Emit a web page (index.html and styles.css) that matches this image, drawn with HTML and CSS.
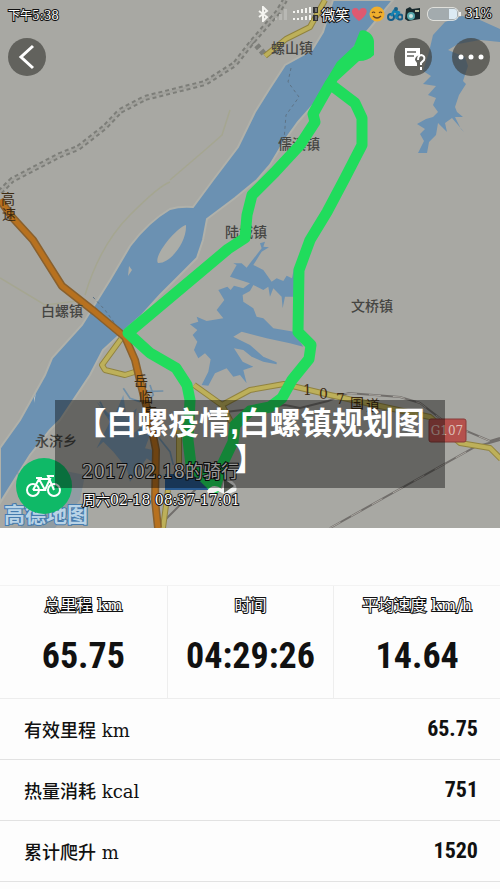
FILE: index.html
```html
<!DOCTYPE html>
<html lang="zh-CN">
<head>
<meta charset="utf-8">
<meta name="viewport" content="width=device-width, initial-scale=1">
<title>2017.02.18的骑行</title>
<link rel="stylesheet" href="styles.css">
</head>
<body>
<main class="page">
  <section class="map">
    <svg class="map-canvas" viewBox="0 0 500 528" preserveAspectRatio="xMidYMid slice" role="img" aria-label="骑行路线">
      <rect width="500" height="528" fill="#a8a8a3"/>
      <!-- river -->
      <path d="M333 0L323 32L312 50L285 65L270 88L255 112L238 147L213 180L193 207Q180 206 170 209Q148 222 130 246L110 280L82 325L52 358L45 375L20 420L0 448V503L30 455L50 430L60 420L90 375L103 350L125 330L142 315L160 295L180 275L197 258L203 240L207 219L235 198L257 180L270 165L285 140L298 122L314 104L340 65L365 34L393 0Z" fill="#6b91b2" stroke="#b0b1aa" stroke-width="2"/>
      <path d="M186 225C176 228 153 256 158 263C170 264 187 242 186 225ZM129 266L132 270L128 276Z" fill="#acada7"/>
      <path d="M34 398L36 393L34 403Z" fill="#c2c5c2"/>
      <!-- north-east lake -->
      <path d="M433 35L445 22L462 16L480 20L500 29V42L480 40L458 44L448 50L465 57L468 66L463 81L466 84L459 95L455 107L457 112L463 117L455 117L461 129L464 132L452 118L445 123L447 132L438 123L436 135L429 142L427 153L418 153L424 141L420 134L425 129L417 124L426 119L433 117L438 112L433 105L436 98L428 95L436 86L423 84L431 76L423 71L429 52Z" fill="#6b91b2"/>
      <!-- central lake -->
      <g transform="translate(90 235) scale(.3333)" fill="#6b91b2">
        <path d="M430 85L440 90L420 125L480 145L460 160L432 152L422 165L412 155L385 165L403 195L380 225L400 250L350 258L320 245L325 260L300 268L322 285L308 300L322 320L312 345L325 370L345 355L362 373L355 410L335 450L355 452L375 415L410 400L430 425L450 420L470 445L460 405L490 395L458 380L432 340L460 345L485 365L520 380L560 388L560 382L520 365L480 330L430 305L455 290L530 310L600 325L640 335L612 290L550 280L520 250L500 245L490 220L460 200L458 180L480 168L490 150L520 165L535 155L540 185L550 160L575 185L578 220L585 185L612 185V100L606 130L590 122L580 138L560 130L545 140L520 105L490 90L515 50L537 37L520 35L525 20L510 25L515 40L480 85L470 98L455 85Z"/>
        <path d="M160 570L180 600L165 640L210 650L200 690L170 670L150 700L120 740L110 700L70 650L40 620L20 640L60 560L20 500L70 550L100 480L110 550L140 520L125 600Z" opacity=".8"/>
        <path d="M100 460L120 490L150 500M160 470L220 468M180 450L190 480L170 500M30 500L50 540L80 550M200 600L240 650L250 690" fill="none" stroke="#718fa7" stroke-width="5"/>
      </g>
      <path d="M15 470L35 485L60 470L85 475L80 500L55 528H20L35 505Z" fill="#7790a3" opacity=".5"/>
      <!-- minor roads -->
      <g fill="none" stroke="#a5a691" stroke-width="1.5">
        <path d="M170 180L205 150L222 135L230 110M85 295Q100 245 130 215T170 182M0 278L45 305L85 300"/>
      </g>
      <!-- railways -->
      <g fill="none">
        <path d="M0 192L12 180L60 155L78 148L105 127L120 111L145 98L205 83L235 64L252 42L278 12L285 0M252 40L265 55" stroke="#7d7e79" stroke-width="6" stroke-dasharray="4 3" stroke-linejoin="round"/>
        <path d="M0 192L12 180L60 155L78 148L105 127L120 111L145 98L205 83L235 64L252 42L278 12L285 0" stroke="#a0a09b" stroke-width="2"/>
        <path d="M291 68L288 82L299 97L286 115L284 140M93 297L105 310L116 325" stroke="#5e7385" stroke-dasharray="3 3"/>
        <path d="M225 412L285 405L300 408L328 401L348 393L400 397L420 403L445 422L490 441L500 438M330 528L475 447L500 440M165 520L200 485" stroke="#716e6b" stroke-width="2"/>
        <path d="M345 393L400 397L420 403L445 422L490 441M330 528L475 447" stroke="#aaa6a0" stroke-width="1" stroke-dasharray="12 12"/>
      </g>
      <!-- yellow roads and highway -->
      <g fill="none" stroke-linejoin="round">
        <path d="M325 0L310 27L286 39L265 56M121 339L102 365L105 370L125 375L141 370M194 385L222 405L250 390L284 384L330 395L430 417L460 443L490 448L501 459M222 405L230 420L238 428M179 430V465M168 490L163 528" stroke="#91833f" stroke-width="6"/>
        <path d="M325 0L310 27L286 39L265 56M121 339L102 365L105 370L125 375L141 370M194 385L222 405L250 390L284 384L330 395L430 417L460 443L490 448L501 459M222 405L230 420L238 428M179 430V465M168 490L163 528" stroke="#bdb05a" stroke-width="4"/>
        <path d="M0 200L12 217L33 240L62 286L95 312L125 337L135 360L141 385L150 420L156 450L155 500L158 528" stroke="#89602d" stroke-width="8"/>
        <path d="M0 200L12 217L33 240L62 286L95 312L125 337L135 360L141 385L150 420L156 450L155 500L158 528" stroke="#b7711f" stroke-width="5"/>
      </g>
      <!-- place names -->
      <g class="place">
        <text x="271" y="53">螺山镇</text>
        <text x="278" y="149">儒溪镇</text>
        <text x="225" y="237">陆城镇</text>
        <text x="41" y="316">白螺镇</text>
        <text x="351" y="311">文桥镇</text>
        <text x="35" y="446">永济乡</text>
      </g>
      <g class="road-name">
        <text x="1" y="204">高</text><text x="2" y="219">速</text>
        <text x="134" y="386">岳</text><text x="139" y="402">临</text><text x="143" y="418">高</text>
        <text x="303" y="395">1</text><text x="319" y="399">0</text><text x="336" y="404">7</text>
        <text x="350" y="408">国</text><text x="366" y="410">道</text>
      </g>
      <rect x="429" y="419" width="37" height="23" rx="2" fill="#b5514d" stroke="#873c3a"/>
      <text class="shield" x="447" y="435">G107</text>
      <rect x="165" y="474" width="50" height="16" fill="#285a90"/>
      <!-- ride track -->
      <path d="M335 86L330 84L318 105L313 114L315 122L300 145L275 172L252 195L247 215L245 238L228 249L128 333L150 353L176 368L187 385L190 400L188 440L191 465L215 488L222 465L233 442L235 425L250 411L270 407L282 398L292 380L309 359L311 345L298 332L299 270L310 240L327 212L345 178L362 145L362 118L355 103L330 84" fill="none" stroke="#20dc5c" stroke-width="11" stroke-linejoin="round"/>
      <path d="M360 31C366 28 375 36 374 43V55Q368 61 359 61L336 82L325 82L337 62L354 46Z" fill="#20dc5c"/>
      <path d="M207 491Q213 482 222 489L224 481L232 481Q238 486 236 491L226 495L218 491L209 495Z" fill="#f0f2f0"/>
      <path d="M224 479l10 7-10 7z" fill="#62665f"/>
      <text class="watermark" x="4" y="522">高德地图</text>
    </svg>

    <header class="top">
      <div class="status">
        <span>下午5:38</span>
        <div class="status-right">
          <svg class="glyph" viewBox="0 0 16 16" fill="none" stroke="#f4f4f0" stroke-width="2"><path d="M4 5l8 6-4 4V1l4 4-8 6"/></svg>
          <svg class="glyph" viewBox="0 0 16 16" fill="#b8b8b4"><path d="M2 12h2v2H2zM6 8h3v6H6zM11 3h3v11h-3z"/></svg>
          <svg class="signals" viewBox="0 0 28 16"><path d="M2 6v-1h2v2H2zM6 4h2v3H6zM10 3h2v4h-2zM14 2h2v5h-2zM18 1h2v6h-2zM2 12h2v2H2zM6 12h2v2H6zM10 11h2v3h-2zM14 10h2v4h-2zM18 9h2v5h-2z" fill="#f4f4f0"/><path d="M22 1h5v6h-5zM22 9h5v6h-5z" fill="#333"/><path d="M24 3h2M24 5h2M24 11h2M24 13h2" stroke="#bbb"/></svg>
          <span class="carrier">微笑</span>
          <svg class="glyph" viewBox="0 0 16 16"><path d="M8 15C-3 7 1 1 5 2Q7 2 8 5Q9 2 12 2C17 2 18 8 8 15Z" fill="#df5970"/></svg>
          <svg class="glyph" viewBox="0 0 16 16"><circle cx="8" cy="8" r="7.500" fill="#f0ae2c"/><path d="M3 7q1.500-2 3 0M10 7q1.500-2 3 0M4 10q4 4 8 0" fill="none" stroke="#634022" stroke-width="1.200"/></svg>
          <svg class="glyph" viewBox="0 0 16 16" fill="none"><circle cx="4" cy="11" r="3" stroke="#155d89" stroke-width="2"/><circle cx="13" cy="11" r="2.500" stroke="#155d89" stroke-width="2"/><path d="M4 10l3-5 4 2-2 3 1 3M8 5l5 2" stroke="#1581b1" stroke-width="2.500"/><circle cx="9" cy="3" r="2" fill="#1b6086"/></svg>
          <svg class="glyph" viewBox="0 0 16 16"><path d="M1 3l4-2 2 2 8-1v11L3 15 0 13z" fill="#18292d"/><circle cx="6" cy="10" r="4" fill="#55a6a9"/><circle cx="6" cy="10" r="2" fill="#cde4df"/><path d="M10 4h4v2h-4z" fill="#b4bd9c"/></svg>
          <svg class="battery" viewBox="0 0 34 14"><rect x="1" y="1" width="30" height="12" rx="5" fill="#a3abae" stroke="#f1f1ed" stroke-width="1.500"/><path d="M22 2h5q3 0 3 3v4q0 3-3 3h-5z" fill="#dceaf3"/><path d="M33 5v4" stroke="#eee" stroke-width="2"/></svg>
          <span>31%</span>
        </div>
      </div>
      <nav class="nav">
        <button class="round" aria-label="返回"><svg viewBox="0 0 38 38" fill="none" stroke="#fff" stroke-width="3"><path d="M25 8L13 19l12 11"/></svg></button>
        <div class="nav-actions">
          <button class="round" aria-label="说明"><svg viewBox="0 0 38 38"><path d="M11 10h15v7q-5 1-5 5l2 3v3H11z" fill="#fff"/><path d="M13 14h9M13 18h7" stroke="#62625e" stroke-width="1.500"/><path d="M24 22q0-5 3.500-5 4 1 2.500 5l-3 3v2M27 29v3" fill="none" stroke="#fff" stroke-width="2"/></svg></button>
          <button class="round" aria-label="更多"><svg viewBox="0 0 38 38" fill="#fff"><circle cx="9" cy="19" r="2.500"/><circle cx="19" cy="19" r="2.500"/><circle cx="29" cy="19" r="2.500"/></svg></button>
        </div>
      </nav>
    </header>

    <div class="ride">
      <svg class="bike" viewBox="0 0 56 56"><circle cx="28" cy="28" r="28" fill="#0fb967"/><g fill="none" stroke="#fff" stroke-width="2"><circle cx="17" cy="32" r="6"/><circle cx="38" cy="32" r="6"/><path d="M17 32l6-11 6 11H17M23 21h11l-5 11M38 32l-6-14h6M20 20h6"/></g></svg>
      <div class="ride-text">
        <div class="ride-title">2017.02.18的骑行</div>
        <div class="ride-date">周六02-18 08:37-17:01</div>
      </div>
    </div>

    <h1 class="banner">【白螺疫情,白螺镇规划图<br>】</h1>
  </section>

  <dl class="stats">
    <div class="stat"><dt>总里程 km</dt><dd>65.75</dd></div>
    <div class="stat"><dt>时间</dt><dd>04:29:26</dd></div>
    <div class="stat"><dt>平均速度 km/h</dt><dd>14.64</dd></div>
  </dl>
  <dl class="rows">
    <div class="row"><dt>有效里程 km</dt><dd>65.75</dd></div>
    <div class="row"><dt>热量消耗 kcal</dt><dd>751</dd></div>
    <div class="row"><dt>累计爬升 m</dt><dd>1520</dd></div>
  </dl>
</main>
</body>
</html>
```
FILE: styles.css
```css
* { box-sizing: border-box; }
body {
  margin: 0;
  background: #fdfdfd;
  color: #111;
  font-family: "DejaVu Serif", "Noto Sans CJK SC", serif;
}
dl, dd, h1 { margin: 0; }

.map { display: grid; overflow: hidden; }
.map > * { grid-area: 1 / 1; }
.map-canvas { display: block; width: 100%; height: auto; }
.place { font-size: 14px; font-weight: 500; fill: #454542; }
.road-name { font-size: 14px; fill: #3c2a12; }
.shield { font-size: 12px; fill: #ddc0b8; text-anchor: middle; }
.watermark {
  font-size: 21px;
  font-weight: 700;
  fill: #b9d3e6;
  stroke: #457bad;
  stroke-width: 2px;
  paint-order: stroke;
}

.top { align-self: start; }
.status {
  display: flex;
  justify-content: space-between;
  align-items: center;
  height: 28px;
  padding: 0 8px;
  font-size: 12px;
}
.status, .ride-text, .stat dt {
  color: #fff;
  -webkit-text-stroke: 2px #111;
  paint-order: stroke fill;
}
.status-right { display: flex; align-items: center; gap: 2px; }
.glyph { width: 16px; height: 16px; }
.signals { width: 28px; height: 16px; }
.battery { width: 34px; height: 14px; margin: 0 2px 0 4px; }
.carrier { font-size: 14px; }

.nav { display: flex; justify-content: space-between; padding: 10px 10px 0 8px; }
.nav-actions { display: flex; gap: 20px; }
.round {
  width: 38px;
  height: 38px;
  padding: 0;
  border: 0;
  border-radius: 50%;
  background: rgba(60, 60, 56, .65);
}
.round svg { display: block; width: 100%; }

.ride {
  display: flex;
  align-items: center;
  align-self: end;
  gap: 10px;
  padding: 0 16px 14px;
}
.bike { width: 56px; height: 56px; }
.ride-title { font-size: 18px; line-height: 28px; }
.ride-date { font-size: 14px; line-height: 28px; }

.banner {
  position: relative;
  align-self: end;
  justify-self: center;
  width: 78%;
  margin-bottom: 40px;
  padding: 6px 10px 10px;
  background: rgba(0, 0, 0, .4);
  color: #fff;
  font: 700 31px/36px "Liberation Sans", "Noto Sans CJK SC", sans-serif;
  text-align: center;
}

.stats {
  display: grid;
  grid-template-columns: repeat(3, 1fr);
  margin-top: 57px;
  border-top: 1px solid #f3f3f3;
  border-bottom: 1px solid #ededed;
}
.stat { padding: 8px 0 4px; text-align: center; }
.stat + .stat { border-left: 1px solid #eee; }
.stat dt { font-size: 16px; line-height: 24px; }
.stat dd {
  font: 700 36px/76px "Roboto Condensed", "Liberation Sans Narrow", Roboto, sans-serif;
}
.row {
  display: flex;
  justify-content: space-between;
  align-items: center;
  height: 61px;
  padding: 0 22px 0 24px;
  border-bottom: 1px solid #e2e2e2;
}
.row dt { font-size: 18px; font-weight: 500; }
.row dd {
  font: 700 22px/32px "Roboto Condensed", "Liberation Sans Narrow", Roboto, sans-serif;
}
```
